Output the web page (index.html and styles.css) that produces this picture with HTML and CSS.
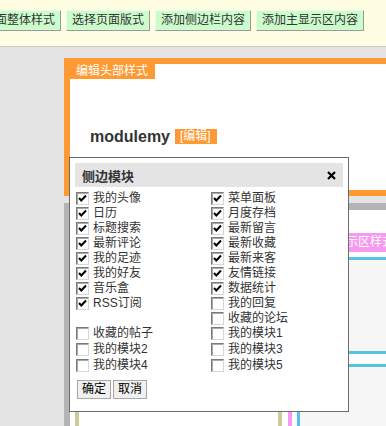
FILE: index.html
```html
<!DOCTYPE html>
<html lang="zh-CN">
<head>
    <meta charset="UTF-8">
    <title>模板编辑</title>
    <link rel="stylesheet" href="styles.css">
</head>
<body>

    <!-- 顶部工具栏 -->
    <div class="toolbar">
        <span class="tool-btn first">页面整体样式</span>
        <span class="tool-btn">选择页面版式</span>
        <span class="tool-btn">添加侧边栏内容</span>
        <span class="tool-btn">添加主显示区内容</span>
    </div>

    <!-- 头部 -->
    <div class="head-box">
        <span class="box-tag">编辑头部样式</span>
        <div class="module-line">
            <span class="module-name">modulemy</span>
            <span class="edit-tag">[编辑]</span>
        </div>
    </div>

    <!-- 内容区 -->
    <div class="body-box">
        <div class="side-col"></div>
        <div class="main-col">
            <span class="main-tag">编辑主显示区样式</span>
            <div class="main-block"></div>
            <div class="main-block open"></div>
        </div>
    </div>

    <!-- 侧边模块对话框 -->
    <div class="dialog">
        <div class="dlg-head">
            <span class="dlg-title">侧边模块</span>
            <svg class="dlg-close" width="9" height="9" viewBox="0 0 9 9">
                <path d="M1 1 L8 8 M8 1 L1 8" stroke="#000" stroke-width="2.2" fill="none"/>
            </svg>
        </div>

        <div class="mod-list">
            <label class="mod on"><i class="cb"></i>我的头像</label>
            <label class="mod on"><i class="cb"></i>菜单面板</label>
            <label class="mod on"><i class="cb"></i>日历</label>
            <label class="mod on"><i class="cb"></i>月度存档</label>
            <label class="mod on"><i class="cb"></i>标题搜索</label>
            <label class="mod on"><i class="cb"></i>最新留言</label>
            <label class="mod on"><i class="cb"></i>最新评论</label>
            <label class="mod on"><i class="cb"></i>最新收藏</label>
            <label class="mod on"><i class="cb"></i>我的足迹</label>
            <label class="mod on"><i class="cb"></i>最新来客</label>
            <label class="mod on"><i class="cb"></i>我的好友</label>
            <label class="mod on"><i class="cb"></i>友情链接</label>
            <label class="mod on"><i class="cb"></i>音乐盒</label>
            <label class="mod on"><i class="cb"></i>数据统计</label>
            <label class="mod on"><i class="cb"></i>RSS订阅</label>
            <label class="mod"><i class="cb"></i>我的回复</label>
            <span class="mod"></span>
            <label class="mod"><i class="cb"></i>收藏的论坛</label>
            <label class="mod"><i class="cb"></i>收藏的帖子</label>
            <label class="mod"><i class="cb"></i>我的模块1</label>
            <label class="mod"><i class="cb"></i>我的模块2</label>
            <label class="mod"><i class="cb"></i>我的模块3</label>
            <label class="mod"><i class="cb"></i>我的模块4</label>
            <label class="mod"><i class="cb"></i>我的模块5</label>
        </div>

        <div class="dlg-btns">
            <button>确定</button>
            <button>取消</button>
        </div>
    </div>

</body>
</html>
```

FILE: styles.css
```css
* {
    box-sizing: border-box;
}

html, body {
    margin: 0;
    padding: 0;
}

body {
    font-family: "Liberation Sans", "Noto Sans CJK SC", sans-serif;
    font-size: 12px;
    color: #333;
    background: #e4e4e4;
    overflow: hidden;
    height: 426px;
    position: relative;
}

/* 顶部工具栏 */
.toolbar {
    display: flex;
    gap: 5px;
    height: 47px;
    padding-top: 10px;
    background: #fffde2;
    border-bottom: 1px solid #c9c9bd;
}

.tool-btn {
    flex: none;
    height: 21px;
    line-height: 19px;
    padding: 0 5px;
    white-space: nowrap;
    background: #ccfccc;
    border: 1px solid;
    border-color: #e8ffe8 #9a9a9a #9a9a9a #e8ffe8;
    color: #333;
}

.tool-btn.first {
    margin-left: -23px;
}

/* 头部 */
.head-box {
    margin: 11px -30px 0 64px;
    height: 138px;
    border: 6px solid #ff9933;
    background: #fff;
}

.box-tag {
    display: inline-block;
    vertical-align: top;
    line-height: 15px;
    padding: 0 7px 0 6px;
    background: #ff9933;
    color: #fff;
}

.module-line {
    display: flex;
    align-items: center;
    height: 15px;
    margin-top: 50px;
    padding-left: 20px;
}

.module-name {
    font-size: 16px;
    font-weight: bold;
    line-height: 15px;
    color: #333;
}

.edit-tag {
    margin-left: 5px;
    line-height: 15px;
    padding: 0 6px 0 5px;
    background: #ff9933;
    color: #fff;
}

/* 内容区 */
.body-box {
    display: flex;
    align-items: flex-start;
    margin: 7px -30px 0 64px;
    height: 260px;
    padding-top: 23px;
    border-top: 7px solid #b4b4b4;
    border-left: 6px solid #b4b4b4;
    background: #fff;
}

.side-col {
    margin-left: 5px;
    width: 207px;
    height: 240px;
    border-left: 4px solid #cccc99;
    border-right: 4px solid #cccc99;
    background: #fff;
}

.main-col {
    flex: 1;
    margin-left: 6px;
    height: 240px;
    border-left: 4px solid #f59af0;
}

.main-tag {
    display: block;
    width: max-content;
    height: 19px;
    line-height: 19px;
    padding: 0 6px;
    background: #f59af0;
    color: #fff;
}

.main-block {
    margin: 5px 0 0 5px;
    height: 97px;
    border: 3px solid #55c4e2;
    border-right: none;
    background: #f6f6f6;
}

.main-block.open {
    margin-top: 10px;
    height: 120px;
    border-bottom: none;
}

/* 对话框 */
.dialog {
    position: absolute;
    left: 69px;
    top: 157px;
    width: 280px;
    height: 255px;
    background: #fff;
    border: 1px solid #6b6b6b;
}

.dlg-head {
    display: flex;
    align-items: center;
    justify-content: space-between;
    height: 24px;
    margin: 5px 5px 0;
    padding: 0 7px;
    background: #e4e4e4;
}

.dlg-title {
    font-size: 13px;
    font-weight: bold;
    color: #333;
}

.mod-list {
    display: grid;
    grid-template-columns: 135px 135px;
    grid-template-rows: repeat(10, 15px) 16px 17px;
    margin-top: 4px;
    padding-left: 6px;
}

.mod {
    display: flex;
    align-items: center;
    gap: 4px;
    line-height: 15px;
    color: #333;
    white-space: nowrap;
}

.cb {
    flex: none;
    width: 13px;
    height: 13px;
    border: 1px solid;
    border-color: #7a7a7a #d6d6d6 #d6d6d6 #7a7a7a;
    box-shadow: inset 1px 1px 0 #a8a8a8;
    background: #fff;
}

.mod.on .cb {
    background: #fff url("data:image/svg+xml;utf8,<svg xmlns='http://www.w3.org/2000/svg' width='11' height='11'><path d='M2 5 L4.3 7.5 L9 2.5' stroke='black' stroke-width='2' fill='none'/></svg>") no-repeat center;
}

.dlg-btns {
    display: flex;
    gap: 2px;
    margin: 6px 0 0 7px;
}

.dlg-btns button {
    height: 19px;
    padding: 0 4px;
    font-family: inherit;
    font-size: 12px;
    line-height: 17px;
    color: #000;
    background: #f0f0f0;
    border: 1px solid #a8a8a8;
    border-radius: 0;
}
```
